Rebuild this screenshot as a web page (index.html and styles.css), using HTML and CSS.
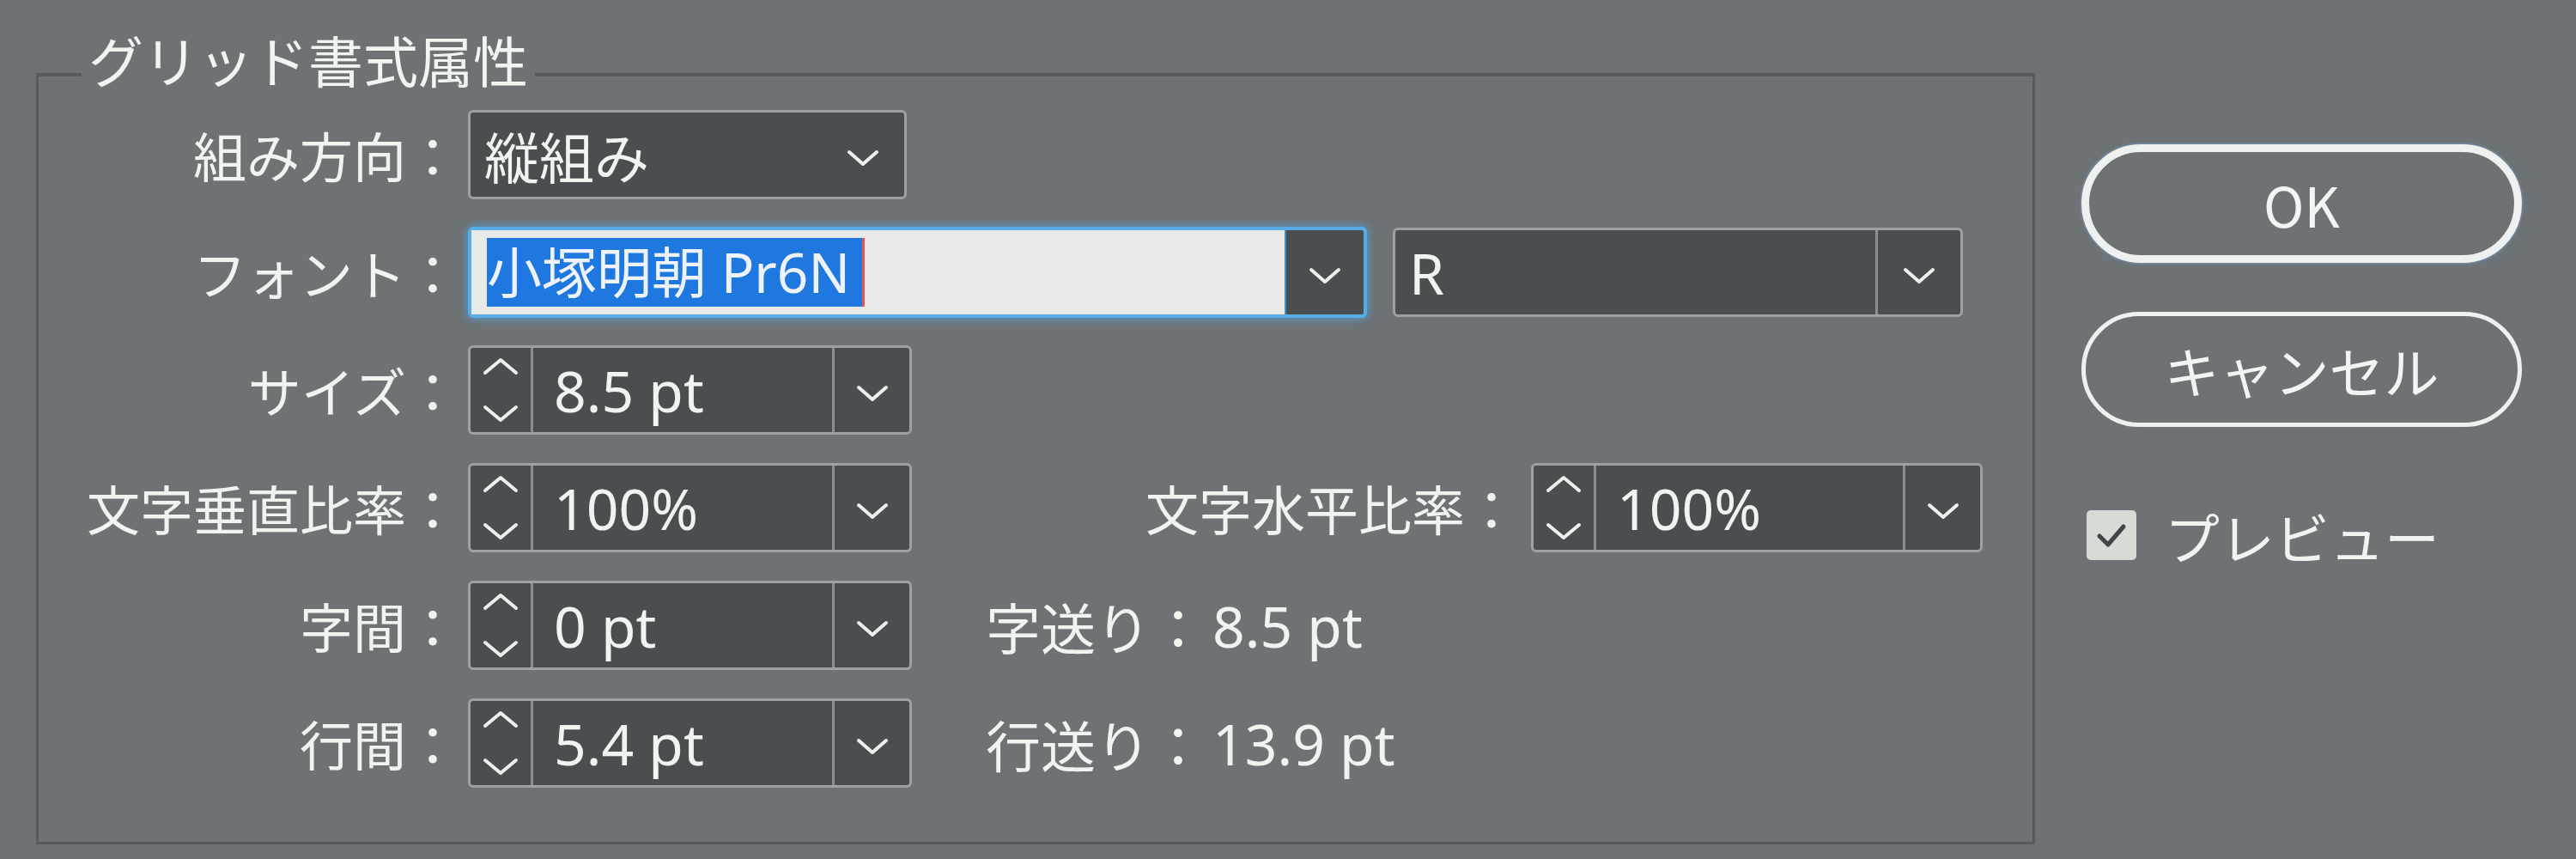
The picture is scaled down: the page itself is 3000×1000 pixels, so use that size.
FILE: index.html
```html
<!DOCTYPE html>
<html lang="ja">
<head>
<meta charset="utf-8">
<title>グリッド書式属性</title>
<link rel="stylesheet" href="styles.css">
</head>
<body>
<div class="dialog">
  <div class="group">
    <span class="title">グリッド書式属性</span>
    <div class="rows">
      <div class="row">
        <span class="lbl">組み方向：</span>
        <div class="box combo-dir">
          <span class="val plain cjk">縦組み</span>
          <span class="dd nodiv"><svg class="chev" viewBox="0 0 40 20" width="40" height="20"><polyline points="4,3 20,17 36,3"/></svg></span>
        </div>
      </div>
      <div class="row">
        <span class="lbl">フォント：</span>
        <div class="fontbox">
          <div class="input"><span class="sel">小塚明朝 Pr6N</span></div>
          <span class="dd fdd"><svg class="chev" viewBox="0 0 40 20" width="40" height="20"><polyline points="4,3 20,17 36,3"/></svg></span>
        </div>
        <div class="box combo-style">
          <span class="val plain">R</span>
          <span class="dd wide"><svg class="chev" viewBox="0 0 40 20" width="40" height="20"><polyline points="4,3 20,17 36,3"/></svg></span>
        </div>
      </div>
      <div class="row">
        <span class="lbl">サイズ：</span>
        <div class="box spinbox">
          <span class="spin"><svg viewBox="0 0 44 78" width="44" height="78"><polyline points="4,19 22,4 40,19"/><polyline points="4,59 22,74 40,59"/></svg></span>
          <span class="val">8.5 pt</span>
          <span class="dd"><svg class="chev" viewBox="0 0 40 20" width="40" height="20"><polyline points="4,3 20,17 36,3"/></svg></span>
        </div>
      </div>
      <div class="row">
        <span class="lbl">文字垂直比率：</span>
        <div class="box spinbox">
          <span class="spin"><svg viewBox="0 0 44 78" width="44" height="78"><polyline points="4,19 22,4 40,19"/><polyline points="4,59 22,74 40,59"/></svg></span>
          <span class="val">100%</span>
          <span class="dd"><svg class="chev" viewBox="0 0 40 20" width="40" height="20"><polyline points="4,3 20,17 36,3"/></svg></span>
        </div>
        <span class="lbl2">文字水平比率：</span>
        <div class="box spinbox hbox">
          <span class="spin"><svg viewBox="0 0 44 78" width="44" height="78"><polyline points="4,19 22,4 40,19"/><polyline points="4,59 22,74 40,59"/></svg></span>
          <span class="val">100%</span>
          <span class="dd"><svg class="chev" viewBox="0 0 40 20" width="40" height="20"><polyline points="4,3 20,17 36,3"/></svg></span>
        </div>
      </div>
      <div class="row">
        <span class="lbl">字間：</span>
        <div class="box spinbox">
          <span class="spin"><svg viewBox="0 0 44 78" width="44" height="78"><polyline points="4,19 22,4 40,19"/><polyline points="4,59 22,74 40,59"/></svg></span>
          <span class="val">0 pt</span>
          <span class="dd"><svg class="chev" viewBox="0 0 40 20" width="40" height="20"><polyline points="4,3 20,17 36,3"/></svg></span>
        </div>
        <span class="info"><span class="ik">字送り：</span><span class="iv">8.5 pt</span></span>
      </div>
      <div class="row">
        <span class="lbl">行間：</span>
        <div class="box spinbox">
          <span class="spin"><svg viewBox="0 0 44 78" width="44" height="78"><polyline points="4,19 22,4 40,19"/><polyline points="4,59 22,74 40,59"/></svg></span>
          <span class="val">5.4 pt</span>
          <span class="dd"><svg class="chev" viewBox="0 0 40 20" width="40" height="20"><polyline points="4,3 20,17 36,3"/></svg></span>
        </div>
        <span class="info"><span class="ik">行送り：</span><span class="iv">13.9 pt</span></span>
      </div>
    </div>
  </div>
  <div class="side">
    <div class="btn ok">OK</div>
    <div class="btn cancel">キャンセル</div>
    <div class="preview">
      <span class="checkbox"><svg viewBox="0 0 58 58" width="58" height="58"><polyline points="15,30 25,40 43,19"/></svg></span>
      <span class="plabel">プレビュー</span>
    </div>
  </div>
</div>
</body>
</html>
```

FILE: styles.css
```css
html, body {
  margin: 0;
  padding: 0;
}
body {
  width: 3000px;
  height: 1000px;
  overflow: hidden;
  background: #6d7275;
  color: #f1f3f1;
  font-family: "Noto Sans", "Noto Sans CJK JP", sans-serif;
}
.dialog {
  display: flex;
  align-items: flex-start;
}
.group {
  position: relative;
  box-sizing: border-box;
  margin-left: 42px;
  margin-top: 85px;
  width: 2328px;
  height: 898px;
  border: 3px solid #575b5e;
  border-top-width: 4px;
  padding-top: 39px;
}
.title {
  position: absolute;
  left: 50px;
  top: -61px;
  padding: 0 8px;
  background: #6d7275;
  font-family: "Noto Sans CJK JP", sans-serif;
  font-size: 64px;
  line-height: 80px;
  color: #f2f4f2;
}
.rows {
  display: flex;
  flex-direction: column;
  gap: 33px;
}
.row {
  display: flex;
  align-items: center;
  height: 104px;
}
.lbl {
  width: 490px;
  margin-right: 10px;
  text-align: right;
  font-family: "Noto Sans CJK JP", sans-serif;
  font-size: 62px;
  line-height: 1;
  white-space: nowrap;
}
.lbl2 {
  margin-left: 272px;
  margin-right: 15px;
  font-family: "Noto Sans CJK JP", sans-serif;
  font-size: 62px;
  line-height: 1;
  white-space: nowrap;
}
.info {
  margin-left: 86px;
  display: flex;
  align-items: center;
  line-height: 1;
  white-space: nowrap;
}
.ik {
  font-family: "Noto Sans CJK JP", sans-serif;
  font-size: 64px;
}
.iv {
  margin-left: 8px;
  font-size: 66px;
}
.box {
  box-sizing: border-box;
  height: 104px;
  display: flex;
  align-items: stretch;
  background: #4a4e51;
  border: 3px solid #9da1a2;
  border-radius: 6px;
}
.combo-dir {
  width: 511px;
}
.combo-style {
  width: 664px;
  margin-left: 30px;
}
.spinbox {
  width: 517px;
}
.hbox {
  width: 526px;
}
.val {
  flex: 1;
  display: flex;
  align-items: center;
  padding-left: 24px;
  font-size: 66px;
  line-height: 1;
  white-space: nowrap;
}
.val.plain {
  padding-left: 16px;
}
.val.cjk {
  font-family: "Noto Sans CJK JP", sans-serif;
  font-size: 64px;
}
.spin {
  box-sizing: border-box;
  width: 73px;
  border-right: 3px solid #8b8f91;
  display: flex;
  align-items: center;
  justify-content: center;
}
.spin svg polyline,
.chev polyline,
.checkbox svg polyline {
  fill: none;
  stroke: #eef0ee;
  stroke-width: 4;
  stroke-linecap: round;
  stroke-linejoin: round;
}
.dd {
  box-sizing: border-box;
  width: 90px;
  border-left: 3px solid #8b8f91;
  display: flex;
  align-items: center;
  justify-content: center;
  padding-top: 8px;
}
.dd.nodiv {
  border-left: none;
  width: 96px;
}
.dd.wide {
  width: 99px;
}
.fontbox {
  box-sizing: border-box;
  width: 1047px;
  height: 106px;
  display: flex;
  border: 4px solid #58ade6;
  border-radius: 6px;
  box-shadow: 0 0 8px 2px rgba(80, 170, 235, 0.6);
  background: #4a4e51;
}
.input {
  flex: 1;
  background: #e7eae7;
  display: flex;
  align-items: center;
  padding-left: 18px;
}
.sel {
  display: flex;
  align-items: center;
  height: 80px;
  padding-right: 14px;
  background: #1f78e0;
  border-right: 3px solid #e4574f;
  color: #eef3fb;
  font-size: 64px;
  line-height: 1;
  white-space: nowrap;
}
.fdd {
  width: 92px;
  border-left: 2px solid #3d8ccc;
}
.side {
  margin-left: 54px;
  padding-top: 168px;
  width: 513px;
  display: flex;
  flex-direction: column;
}
.btn {
  box-sizing: border-box;
  display: flex;
  align-items: center;
  justify-content: center;
  font-family: "Noto Sans CJK JP", sans-serif;
  font-size: 64px;
  line-height: 1;
  color: #f3f5f4;
  border: 6px solid #eef1f0;
}
.ok {
  height: 138px;
  border-radius: 69px;
  border-width: 9px;
  box-shadow: 0 0 3px 1px rgba(120, 170, 220, 0.6);
}
.cancel {
  height: 134px;
  border-radius: 67px;
  margin-top: 57px;
  border-width: 5px;
}
.preview {
  margin-top: 96px;
  display: flex;
  align-items: center;
  height: 60px;
}
.checkbox {
  margin-left: 6px;
  width: 58px;
  height: 58px;
  border-radius: 5px;
  background: #d7dbd6;
  display: flex;
}
.checkbox svg polyline {
  stroke: #40464a;
  stroke-width: 5;
}
.plabel {
  margin-left: 33px;
  font-family: "Noto Sans CJK JP", sans-serif;
  font-size: 64px;
  line-height: 1;
}
```
